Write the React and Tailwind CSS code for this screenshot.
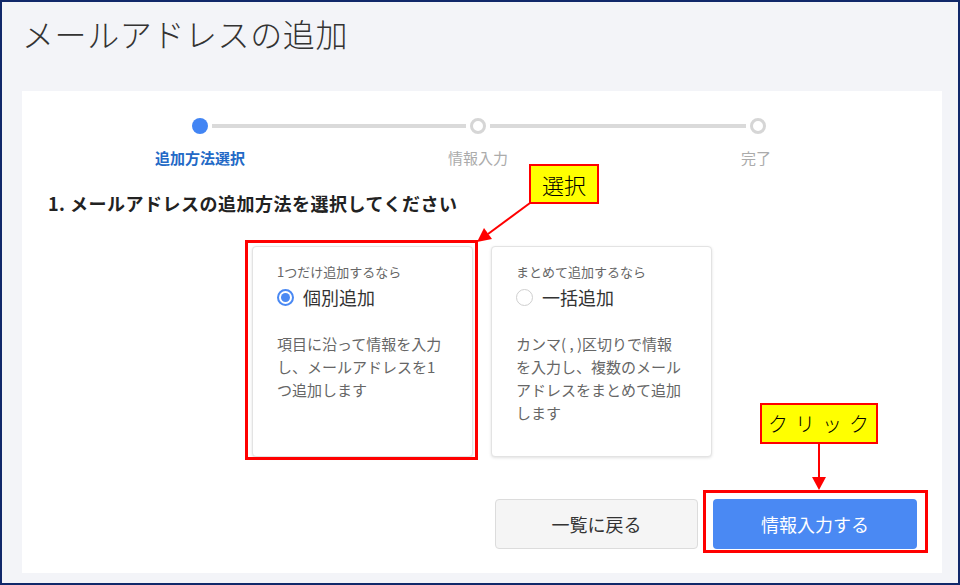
import React from 'react';

const steps = [
  { label: '追加方法選択', active: true },
  { label: '情報入力', active: false },
  { label: '完了', active: false },
];

const options = [
  {
    hint: '1つだけ追加するなら',
    title: '個別追加',
    checked: true,
    lines: ['項目に沿って情報を入力', 'し、メールアドレスを1', 'つ追加します'],
  },
  {
    hint: 'まとめて追加するなら',
    title: '一括追加',
    checked: false,
    lines: ['カンマ( , )区切りで情報', 'を入力し、複数のメール', 'アドレスをまとめて追加', 'します'],
  },
];

function Radio({ checked }) {
  if (checked) {
    return (
      <span className="flex h-[17px] w-[17px] items-center justify-center rounded-full border-2 border-[#4a89f3] bg-white">
        <span className="h-[9px] w-[9px] rounded-full bg-[#4a89f3]" />
      </span>
    );
  }
  return <span className="h-[17px] w-[17px] rounded-full border border-[#cfcfcf] bg-white" />;
}

function Stepper() {
  return (
    <div className="ml-[39px] w-[834px]">
      {/* dots and lines */}
      <div className="flex h-[17px] items-center pl-[131px]">
        <span className="h-4 w-4 rounded-full bg-[#4285f4]" />
        <span className="ml-1 h-1 w-[254px] bg-[#dadada]" />
        <span className="ml-1 h-4 w-4 rounded-full border-[3px] border-[#d6d6d6] bg-white" />
        <span className="ml-1 h-1 w-[256px] bg-[#dadada]" />
        <span className="ml-1 h-4 w-4 rounded-full border-[3px] border-[#d6d6d6] bg-white" />
      </div>
      {/* labels */}
      <div className="mt-[13px] grid grid-cols-3 text-center text-[15px] leading-[22px]">
        {steps.map((s) => (
          <div key={s.label} className={s.active ? 'font-bold text-[#2369c6]' : 'text-[#ababab]'}>
            {s.label}
          </div>
        ))}
      </div>
    </div>
  );
}

function OptionCard({ option }) {
  return (
    <div className="h-[211px] w-[221px] rounded-[4px] border border-[#e3e3e3] bg-white px-[24px] pt-[16px] shadow-[0_1px_3px_rgba(0,0,0,0.12)]">
      <div className="text-[13px] leading-[18px] text-[#666]">{option.hint}</div>
      <div className="mt-[4px] flex h-[24px] items-center gap-[9px]">
        <Radio checked={option.checked} />
        <span className="text-[18px] leading-[24px] text-[#333]">{option.title}</span>
      </div>
      <p className="mt-[23px] whitespace-pre text-[15px] leading-[23px] text-[#666]">
        {option.lines.map((l, i) => (
          <React.Fragment key={i}>
            {l}
            {i < option.lines.length - 1 && <br />}
          </React.Fragment>
        ))}
      </p>
    </div>
  );
}

export default function App() {
  return (
    <div className="relative h-[585px] w-[960px] overflow-hidden font-['Noto_Sans_CJK_JP','Noto_Sans',sans-serif]">
      <div className="box-border h-full w-full border-2 border-[#10286a] bg-[#f3f4f8] pl-[20px] pr-[16px] pt-[7px]">
        <h1 className="h-[82px] text-[32px] font-light leading-[48px] tracking-[0.6px] text-[#333]">
          メールアドレスの追加
        </h1>

        <div className="h-[482px] bg-white pt-[26px]">
          <Stepper />

          <h2 className="ml-[26px] mt-[21px] text-[18px] font-bold leading-[26px] tracking-[0.5px] text-[#222]">
            1. メールアドレスの追加方法を選択してください
          </h2>

          <div className="mt-[30px] flex justify-center gap-[18px]">
            {options.map((o) => (
              <OptionCard key={o.title} option={o} />
            ))}
          </div>

          <div className="mr-[25px] mt-[42px] flex justify-end gap-[15px]">
            <button className="h-[50px] w-[203px] rounded-[4px] border border-[#dcdcdc] bg-[#f5f5f5] text-[18px] text-[#333]">
              一覧に戻る
            </button>
            <button className="h-[50px] w-[204px] rounded-[4px] bg-[#4a89f3] text-[18px] text-white">
              情報入力する
            </button>
          </div>
        </div>
      </div>

      {/* annotations */}
      <div className="absolute left-[245px] top-[240px] h-[220px] w-[233px] border-[3px] border-[#ff0000]" />
      <div className="absolute left-[703px] top-[490px] h-[63px] w-[225px] border-[3px] border-[#ff0000]" />

      <div className="absolute left-[529px] top-[164px] flex h-[40px] w-[70px] items-center justify-center border-2 border-[#ff0000] bg-[#ffff00] text-[22px] font-light text-black">
        選択
      </div>
      <div className="absolute left-[760px] top-[403px] flex h-[41px] w-[118px] items-center justify-center border-2 border-[#ff0000] bg-[#ffff00] pl-[6px] text-[20px] font-light tracking-[7px] text-black">
        クリック
      </div>

      <svg className="pointer-events-none absolute left-0 top-0" width="960" height="585">
        <line x1="530" y1="203" x2="488" y2="234" stroke="#ff0000" strokeWidth="2" />
        <polygon points="477,242 484,228 492,239" fill="#ff0000" />
        <line x1="819" y1="443" x2="819" y2="478" stroke="#ff0000" strokeWidth="2" />
        <polygon points="812,477 826,477 819,490" fill="#ff0000" />
      </svg>
    </div>
  );
}
